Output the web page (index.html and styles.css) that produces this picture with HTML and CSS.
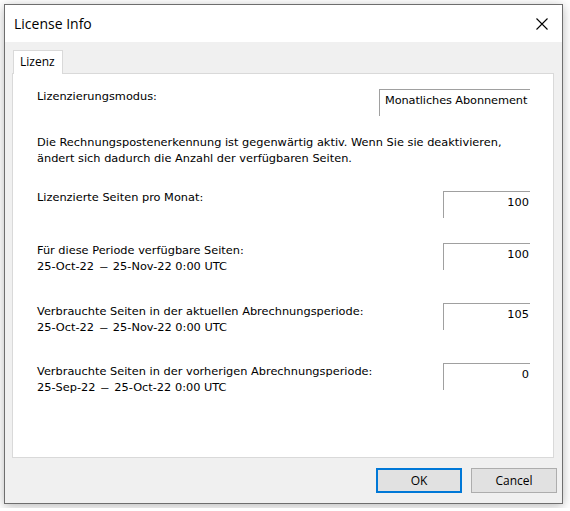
FILE: index.html
```html
<!DOCTYPE html>
<html>
<head>
<meta charset="utf-8">
<link rel="stylesheet" href="styles.css">
</head>
<body>
<div class="window">
  <div class="titlebar">
    <span class="title">License Info</span>
    <svg class="close" width="12" height="12" viewBox="0 0 12 12"><path d="M0.5 0.5 L11.5 11.5 M11.5 0.5 L0.5 11.5" stroke="#000" stroke-width="1.1" fill="none"/></svg>
  </div>
  <div class="client">
    <div class="tabs"><div class="tab">Lizenz</div></div>
    <div class="panel">
      <div class="row row1">
        <div class="label">Lizenzierungsmodus:</div>
        <div class="box box-wide">Monatliches Abonnement</div>
      </div>
      <p class="para">Die Rechnungspostenerkennung ist gegenwärtig aktiv. Wenn Sie sie deaktivieren,<br>ändert sich dadurch die Anzahl der verfügbaren Seiten.</p>
      <div class="row row2">
        <div class="label">Lizenzierte Seiten pro Monat:</div>
        <div class="box box-num">100</div>
      </div>
      <div class="row row3">
        <div class="label">Für diese Periode verfügbare Seiten:<br>25-Oct-22 <span class="dash">–</span> 25-Nov-22 0:00 UTC</div>
        <div class="box box-num">100</div>
      </div>
      <div class="row row4">
        <div class="label">Verbrauchte Seiten in der aktuellen Abrechnungsperiode:<br>25-Oct-22 <span class="dash">–</span> 25-Nov-22 0:00 UTC</div>
        <div class="box box-num">105</div>
      </div>
      <div class="row row5">
        <div class="label">Verbrauchte Seiten in der vorherigen Abrechnungsperiode:<br>25-Sep-22 <span class="dash">–</span> 25-Oct-22 0:00 UTC</div>
        <div class="box box-num">0</div>
      </div>
    </div>
    <div class="buttons">
      <div class="btn btn-default">OK</div>
      <div class="btn">Cancel</div>
    </div>
  </div>
</div>
</body>
</html>
```
FILE: styles.css
```css
* { box-sizing: border-box; }
html, body { margin: 0; padding: 0; background: #fff; }
body {
  font-family: "DejaVu Sans", Verdana, sans-serif;
  font-size: 11.35px;
  color: #000;
}
.window {
  margin: 4px;
  width: 559px;
  height: 500px;
  border: 1px solid #6e6e6e;
  box-shadow: 0 2px 10px rgba(0,0,0,0.28);
  display: flex;
  flex-direction: column;
}
.titlebar {
  height: 37px;
  background: #fff;
  display: flex;
  align-items: center;
  justify-content: space-between;
  padding: 0 14px 0 9px;
}
.title {
  font-family: "Open Sans", "Noto Sans", sans-serif;
  font-size: 14px;
  color: #000;
}
.close { display: block; margin-top: 1px; }
.client {
  flex: 1;
  background: #f0f0f0;
  padding-top: 8px;
  display: flex;
  flex-direction: column;
}
.tabs { display: flex; padding-left: 8px; }
.tab {
  position: relative;
  z-index: 1;
  margin-bottom: -1px;
  width: 50px;
  height: 24px;
  background: #fff;
  border: 1px solid #d9d9d9;
  border-bottom: none;
  padding: 3px 0 0 6px;
  line-height: 16px;
  font-family: "Open Sans", "Noto Sans", sans-serif;
  font-size: 12px;
}
.panel {
  margin-left: 7px;
  width: 542px;
  height: 385px;
  background: #fff;
  border: 1px solid #d9d9d9;
  padding: 14px 23px 0 24px;
  line-height: 16px;
}
.row { display: flex; justify-content: space-between; align-items: flex-start; }
.label { white-space: nowrap; }
.dash { display: inline-block; transform: scaleX(1.6); margin: 0 3px; }
.box {
  height: 27px;
  border-top: 1px solid #a0a0a0;
  border-left: 1px solid #a0a0a0;
  white-space: nowrap;
  overflow: hidden;
}
.box-wide { width: 151px; padding: 2px 0 0 5px; margin-top: 1px; letter-spacing: -0.1px; }
.box-num { width: 87px; text-align: right; padding: 2px 1px 0 0; }
.row1 { height: 28px; }
.para { margin: 18px 0 0 0; height: 32px; }
.row2 { margin-top: 23px; height: 29px; }
.row2 .box { margin-top: 2px; }
.row3 { margin-top: 24px; height: 32px; }
.row3 .box { margin-top: 1px; }
.row4 { margin-top: 29px; height: 32px; }
.row5 { margin-top: 28px; height: 32px; }
.buttons {
  display: flex;
  justify-content: flex-end;
  gap: 9px;
  margin-top: 10px;
  padding-right: 5px;
}
.btn {
  width: 86px;
  height: 25px;
  background: #e1e1e1;
  border: 1px solid #adadad;
  display: flex;
  align-items: center;
  justify-content: center;
  font-family: "Open Sans", "Noto Sans", sans-serif;
  font-size: 12px;
}
.btn-default { border: 2px solid #0078d7; }
```
